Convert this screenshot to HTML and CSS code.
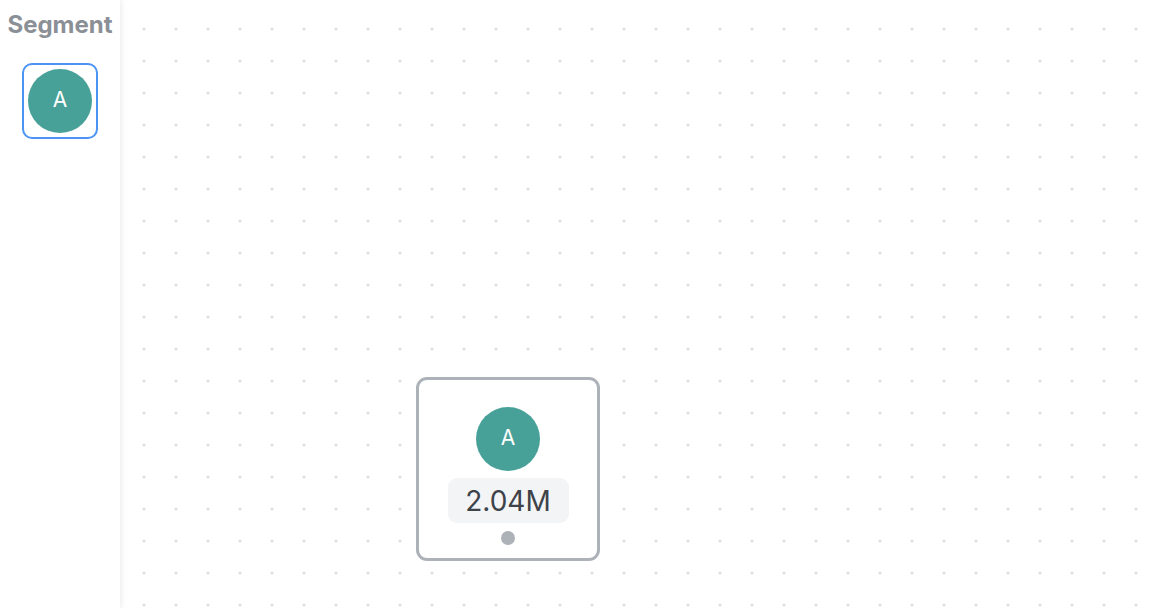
FILE: index.html
```html
<!DOCTYPE html>
<html>
<head>
<meta charset="utf-8">
<link rel="stylesheet" href="styles.css">
</head>
<body>
<div class="app">
  <aside class="sidebar">
    <h2 class="sidebar-title">Segment</h2>
    <div class="palette">
      <div class="palette-item selected">
        <div class="avatar">A</div>
      </div>
    </div>
  </aside>
  <main class="canvas">
    <div class="node" style="left:296px; top:377px;">
      <div class="avatar">A</div>
      <div class="node-value">2.04M</div>
      <div class="node-port"></div>
    </div>
  </main>
</div>
</body>
</html>
```
FILE: styles.css
```css
* { box-sizing: border-box; }
html, body { margin: 0; padding: 0; height: 100%; }
body {
  font-family: Inter, "Noto Sans", "Liberation Sans", sans-serif;
  background: #ffffff;
  overflow: hidden;
}
.app {
  display: flex;
  width: 1150px;
  height: 608px;
}
.sidebar {
  width: 120px;
  flex: 0 0 120px;
  background: #ffffff;
  position: relative;
  z-index: 2;
  box-shadow: 2px 0 5px rgba(0, 0, 0, 0.07);
  display: flex;
  flex-direction: column;
  align-items: center;
}
.sidebar-title {
  margin: 10px 0 0 0;
  font-size: 24px;
  font-weight: 700;
  color: #8b8f96;
  line-height: 30px;
  letter-spacing: 0;
}
.palette {
  margin-top: 23px;
  display: flex;
  flex-direction: column;
  gap: 8px;
}
.palette-item {
  width: 76px;
  height: 76px;
  padding: 4px;
  border: 2px solid transparent;
  border-radius: 10px;
}
.palette-item.selected {
  border-color: #4b93f4;
}
.avatar {
  width: 64px;
  height: 64px;
  border-radius: 50%;
  background: #48a199;
  color: #ffffff;
  font-size: 21px;
  display: flex;
  align-items: center;
  justify-content: center;
  line-height: 1;
  padding-bottom: 3px;
}
.canvas {
  flex: 1;
  position: relative;
  background-color: #ffffff;
  background-image: radial-gradient(circle at 16px 16px, #dcdde2 1.3px, transparent 1.7px);
  background-size: 32px 32px;
  background-position: 8px 13px;
}
.node {
  position: absolute;
  width: 184px;
  height: 184px;
  border: 3px solid #adb2b9;
  border-radius: 11px;
  background: #ffffff;
  display: flex;
  flex-direction: column;
  align-items: center;
  padding-top: 27px;
}
.node-value {
  margin-top: 7px;
  width: 121px;
  height: 45px;
  background: #f3f4f6;
  border-radius: 9px;
  color: #3e4249;
  font-size: 28px;
  display: flex;
  align-items: center;
  justify-content: center;
  letter-spacing: 0;
}
.node-port {
  margin-top: 8px;
  width: 14px;
  height: 14px;
  border-radius: 50%;
  background: #adb2b9;
}
```
